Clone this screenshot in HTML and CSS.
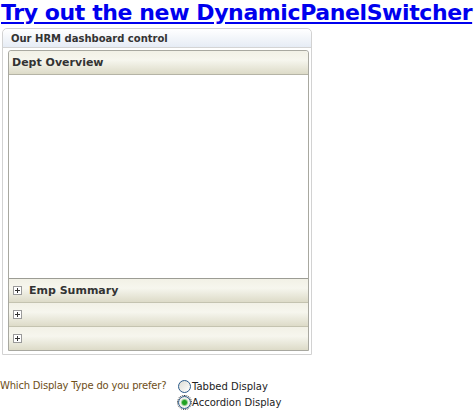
FILE: index.html
```html
<!doctype html>
<html>
<head>
<meta charset="utf-8">
<title>Dashboard</title>
<link rel="stylesheet" href="styles.css">
</head>
<body>
<h1 class="title"><a href="#">Try out the new DynamicPanelSwitcher</a></h1>
<div class="dash">
	<div class="dashHead">Our HRM dashboard control</div>
	<div class="acc">
		<div class="accHead accOpen">Dept Overview</div>
		<div class="accBody"></div>
		<div class="accHead"><span class="plus"></span>Emp Summary</div>
		<div class="accHead"><span class="plus"></span></div>
		<div class="accHead accLast"><span class="plus"></span></div>
	</div>
</div>
<div class="pref">
	<span class="prefLabel">Which Display Type do you prefer?</span>
	<ul class="opts">
		<li><span class="radio"></span>Tabbed Display</li>
		<li><span class="radio radioOn"></span>Accordion Display</li>
	</ul>
</div>
</body>
</html>
```
FILE: styles.css
```css
html,
body {
	margin: 0;
	background: #fff;
	font-family: "DejaVu Sans", Verdana, sans-serif;
}
ul {
	margin: 0;
	padding: 0;
	list-style: none;
}
.title {
	margin: 0;
	height: 27px;
	font-size: 22px;
	line-height: 26px;
	letter-spacing: -0.4px;
	white-space: nowrap;
}
.title a {
	color: #0000ee;
	padding-left: 1px;
}
.dash {
	margin: 1px 0 0 2px;
	width: 308px;
	border: 1px solid #d2d2d2;
	border-radius: 5px 5px 0 0;
	padding-bottom: 3px;
}
.dashHead {
	height: 18px;
	line-height: 19px;
	padding-left: 8px;
	font-size: 10px;
	font-weight: bold;
	color: #333;
	background: linear-gradient(#ffffff, #e6ecf5);
	border-bottom: 1px solid #d4d4d4;
	border-radius: 5px 5px 0 0;
}
.acc {
	margin: 2px 2px 0 5px;
	border: 1px solid #a8a8a0;
	border-radius: 3px 3px 0 0;
}
.accHead {
	display: flex;
	align-items: center;
	height: 23px;
	padding-left: 4px;
	font-size: 11px;
	font-weight: bold;
	color: #333;
	background: linear-gradient(#f2f1e6, #f6f6ee 40%, #dddbc8);
	border-bottom: 1px solid #c4c3b0;
}
.accOpen {
	padding-left: 3px;
	border-radius: 3px 3px 0 0;
	border-bottom-color: #b5b4a6;
}
.accLast {
	border-bottom: none;
}
.accBody {
	height: 203px;
	background: #fff;
	border-bottom: 1px solid #9c9c94;
}
.plus {
	position: relative;
	width: 7px;
	height: 7px;
	margin-right: 7px;
	border: 1px solid #9a9a9a;
	background: #fff;
}
.plus::before,
.plus::after {
	content: "";
	position: absolute;
	background: #333;
}
.plus::before {
	left: 1px;
	top: 3px;
	width: 5px;
	height: 1px;
}
.plus::after {
	left: 3px;
	top: 1px;
	width: 1px;
	height: 5px;
}
.pref {
	display: flex;
	margin-top: 23px;
	font-size: 10px;
}
.prefLabel {
	width: 178px;
	color: #6e4e18;
	line-height: 16px;
	letter-spacing: -0.2px;
}
.opts li {
	display: flex;
	align-items: center;
	height: 16px;
	color: #222;
}
.radio {
	box-sizing: border-box;
	width: 13px;
	height: 13px;
	margin-right: 1px;
	border: 1px solid #2a5a8a;
	border-radius: 50%;
	background: linear-gradient(135deg, #dcdcd4, #fff);
}
.radioOn {
	outline: 1px dotted #333;
	background: radial-gradient(circle, #21a121 0 2px, #8ed08e 3px, #f0f0ea 4px);
}
```
